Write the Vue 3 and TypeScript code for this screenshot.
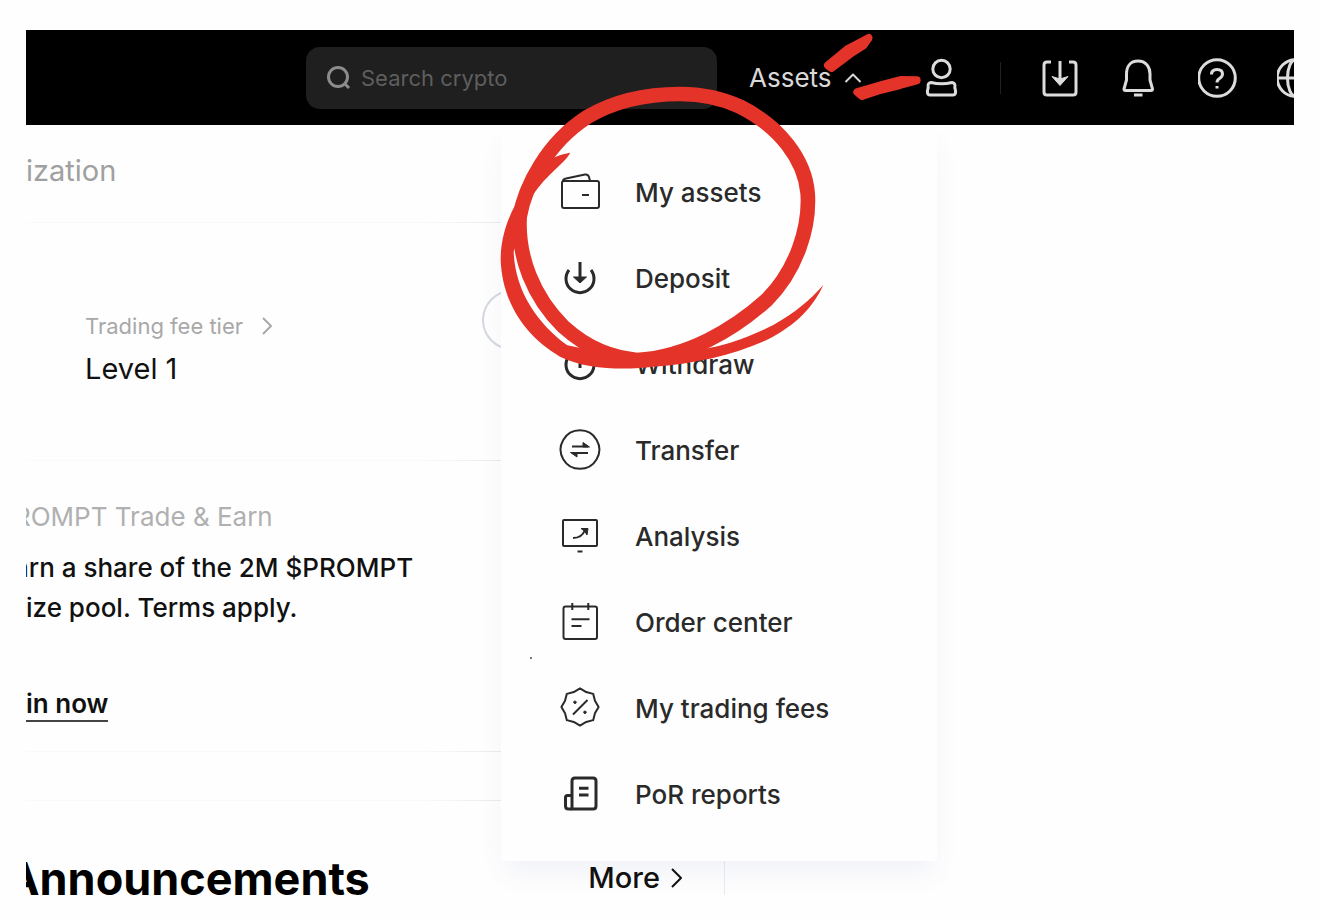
<script setup lang="ts">
interface Shape {
  d: string
  solid?: boolean
}
interface MenuItem {
  label: string
  heavy?: boolean
  shapes: Shape[]
}

function badgeOutline(cx: number, cy: number, tip: number, waist: number): string {
  const point = (r: number, step: number) => {
    const a = (step * Math.PI) / 8 - Math.PI / 2
    return `${(cx + r * Math.cos(a)).toFixed(2)} ${(cy + r * Math.sin(a)).toFixed(2)}`
  }
  let d = `M${point(tip, 0)}`
  for (let i = 1; i <= 16; i++) d += `L${point(i % 2 ? waist : tip, i)}`
  return d + 'Z'
}

const menu: MenuItem[] = [
  {
    label: 'My assets',
    shapes: [
      { d: 'M5 10H38Q40 10 40 12V35Q40 37 38 37H5Q3 37 3 35V12Q3 10 5 10Z' },
      { d: 'M4 10Q4 8 7 7.5L26 3.6Q29 3.2 30 6L31 10' },
      { d: 'M23 24H30' },
    ],
  },
  {
    label: 'Deposit',
    heavy: true,
    shapes: [
      { d: 'M10 13A14 14 0 1 0 32 13' },
      { d: 'M21 5V24' },
      { d: 'M14.5 20H27.5L21 26Z', solid: true },
    ],
  },
  {
    label: 'Withdraw',
    heavy: true,
    shapes: [
      { d: 'M10 13A14 14 0 1 0 32 13' },
      { d: 'M21 25V7' },
      { d: 'M14.5 12H27.5L21 5Z', solid: true },
    ],
  },
  {
    label: 'Transfer',
    shapes: [
      { d: 'M21 1.2A19.3 19.3 0 1 1 20.9 1.2Z' },
      { d: 'M13 17.5H29' },
      { d: 'M24 13.5L30.5 18H24Z', solid: true },
      { d: 'M13 24H29' },
      { d: 'M18 28L11.5 23.5H18Z', solid: true },
    ],
  },
  {
    label: 'Analysis',
    shapes: [
      { d: 'M5 5H37Q38 5 38 6V30Q38 31 37 31H5Q4 31 4 30V6Q4 5 5 5Z' },
      { d: 'M14 23Q23 23 26 15' },
      { d: 'M22 13.5H29L28 20L25.5 16Z', solid: true },
      { d: 'M18.5 36.5H23.5' },
    ],
  },
  {
    label: 'Order center',
    shapes: [
      { d: 'M6.5 5.5H36Q38 5.5 38 7.5V36Q38 38 36 38H6.5Q4.5 38 4.5 36V7.5Q4.5 5.5 6.5 5.5Z' },
      { d: 'M13.3 2V9M29.3 2V9' },
      { d: 'M12.5 18.3H30.5M12.5 25H22.5' },
    ],
  },
  {
    label: 'My trading fees',
    shapes: [
      { d: badgeOutline(21, 20, 18.6, 16.2) },
      { d: 'M14 27.5L28.5 13' },
      { d: 'M16 14A1.3 1.3 0 1 1 15.9 14ZM26 24A1.3 1.3 0 1 1 25.9 24Z', solid: true },
    ],
  },
  {
    label: 'PoR reports',
    heavy: true,
    shapes: [
      { d: 'M16 5H34Q37 5 37 8V33Q37 36 34 36H13V8Q13 5 16 5Z' },
      { d: 'M13 22.5H8.5Q6.5 22.5 6.5 24.5V33Q6.5 36 9.5 36H13' },
      { d: 'M20 15.3H29.5M20 22H29.5' },
    ],
  },
]
</script>

<template>
  <div class="frame">
    <header class="topbar">
      <label class="search">
        <svg width="26" height="26" viewBox="0 0 26 26" aria-hidden="true">
          <circle cx="12" cy="12" r="9.5" />
          <path d="M18.5 18.5L23 23" />
        </svg>
        <input type="search" placeholder="Search crypto" aria-label="Search crypto" />
      </label>
      <button class="assets" type="button" aria-expanded="true">
        Assets
        <svg width="18" height="12" viewBox="0 0 18 12" aria-hidden="true"><path d="M1.5 10L9 2.5L16.5 10" /></svg>
      </button>
      <nav class="tools">
        <button type="button" aria-label="Account">
          <svg viewBox="0 0 40 40">
            <circle cx="20.5" cy="11" r="8.7" />
            <path d="M10 24.5Q20.500 27 31 24.500Q34.800 25 33.800 29.500Q36 37 32 37H9Q5 37 7.200 29.500Q6.200 25 10 24.500Z" />
          </svg>
        </button>
        <span class="rule"></span>
        <button type="button" aria-label="Download">
          <svg viewBox="0 0 40 40">
            <path d="M11 4H7Q4 4 4 7V34Q4 37 7 37H33Q36 37 36 34V7Q36 4 33 4H29" />
            <path d="M20 3V24" />
            <path class="solid" d="M12 18.500L20 21L28 18.500L20 27.500Z" />
          </svg>
        </button>
        <button type="button" aria-label="Notifications">
          <svg viewBox="0 0 40 40">
            <path d="M19 3C11 3 7.500 9 7.500 16V22L5 31Q5 32.500 6.500 32.500H32Q33.500 32.500 33.500 31L31 22V16C31 9 27 3 19 3Z" />
            <path d="M15 37H23.500" />
          </svg>
        </button>
        <button type="button" aria-label="Help">
          <svg viewBox="0 0 40 40">
            <circle cx="19" cy="20" r="18.300" />
            <path d="M13.500 16.500Q13.500 11.500 19 11.500T24.500 16Q24.500 18.500 21.500 20.500Q19 22 19 24.500" />
            <path d="M19 28V30.500" />
          </svg>
        </button>
        <button type="button" aria-label="Language">
          <svg viewBox="0 0 40 40">
            <circle cx="18.500" cy="20" r="18.300" />
            <ellipse cx="18.500" cy="20" rx="8" ry="18.300" />
            <path d="M0 20H37" />
          </svg>
        </button>
      </nav>
    </header>

    <main>
      <div class="tabs line"><a href="#">ization</a></div>

      <section class="tier line">
        <div>
          <a class="muted" href="#">
            Trading fee tier
            <svg width="12" height="20" viewBox="0 0 12 20" aria-hidden="true"><path d="M2 2L10 10L2 18" /></svg>
          </a>
          <p class="level">Level 1</p>
        </div>
        <button class="round" type="button" aria-label="Next"></button>
      </section>

      <section class="promo line">
        <p class="campaign">ROMPT Trade &amp; Earn</p>
        <p class="offer">arn a share of the 2M $PROMPT<br />ize pool. Terms apply.</p>
        <a class="join" href="#">in now</a>
      </section>

      <div class="spacer line"></div>

      <section class="news">
        <h2>Announcements</h2>
        <a href="#">
          More
          <svg width="12" height="20" viewBox="0 0 12 20" aria-hidden="true"><path d="M1 1L10 10L1 19" /></svg>
        </a>
      </section>
    </main>

    <ul class="menu">
      <li v-for="item in menu" :key="item.label">
        <a href="#">
          <svg width="42" height="42" viewBox="0 0 42 42" :class="{ heavy: item.heavy }" aria-hidden="true">
            <path v-for="s in item.shapes" :key="s.d" :d="s.d" :class="{ solid: s.solid }" />
          </svg>
          {{ item.label }}
        </a>
      </li>
    </ul>
    <i class="speck"></i>

    <svg class="ink" width="450" height="360" viewBox="0 0 1350 1080" aria-hidden="true">
      <g transform="translate(0 120)">
        <path class="ring" d="M600 72C480 72 390 100 320 142C200 220 135 350 119 440C112 560 160 680 250 770C330 842 400 862 470 870C620 862 760 780 860 690C950 600 990 470 983 370C975 270 900 170 780 110C720 82 660 72 600 72Z" />
        <path d="M270 248C235 255 200 268 185 285C140 350 62 440 62 570C66 680 120 790 240 860C320 900 440 900 520 890C640 882 760 855 860 810C950 765 1000 710 1030 645C990 690 950 725 880 765C800 805 730 830 660 838L470 852L330 840L262 826C170 760 105 660 101 545L150 390C190 320 250 285 270 250Z" />
      </g>
      <path class="dash" d="M1044 106L1102 58L1128 44L1166 24L1150 46L1110 72L1054 114Z" />
      <path class="dash" d="M1132 186L1210 164L1262 150L1310 151L1260 165L1200 180L1146 198Z" />
    </svg>
  </div>
</template>

<style>
body {
  margin: 0;
  background: #fefefe;
}
</style>

<style scoped>
.frame {
  position: relative;
  margin: 30px 26px 25px;
  overflow: hidden;
  font-family: Inter, "Liberation Sans", sans-serif;
  color: #111;
}
a {
  color: inherit;
  text-decoration: none;
}
p,
h2,
ul {
  margin: 0;
  padding: 0;
}
button {
  padding: 0;
  border: 0;
  background: none;
  font: inherit;
}
svg {
  flex: none;
  fill: none;
  stroke: currentColor;
  stroke-width: 2;
  stroke-linejoin: round;
}
.heavy {
  stroke-width: 3;
}
.solid {
  fill: currentColor;
  stroke-width: 1;
}

.topbar {
  display: flex;
  align-items: center;
  height: 95px;
  padding-left: 280px;
  background: #000;
  color: #dcdcdc;
}
.search {
  display: flex;
  flex: none;
  align-items: center;
  gap: 9px;
  box-sizing: border-box;
  width: 411px;
  height: 62px;
  padding: 0 20px;
  border-radius: 14px;
  background: #1f1f1f;
  color: #8c8c8c;
}
.search svg {
  stroke-width: 3;
}
.search input {
  flex: 1;
  min-width: 0;
  padding: 0;
  border: 0;
  outline: 0;
  background: none;
  color: #ddd;
  font: 400 22px/30px Inter, "Liberation Sans", sans-serif;
}
.search input::placeholder {
  color: #5e5e5e;
  opacity: 1;
}
.assets {
  display: flex;
  flex: none;
  align-items: center;
  gap: 12px;
  width: 172px;
  margin-left: 32px;
  color: #d8d8d8;
  font-size: 26px;
}
.tools {
  display: flex;
  align-items: center;
  gap: 39px;
}
.tools button,
.tools svg {
  display: block;
  flex: none;
  width: 40px;
  height: 40px;
  color: inherit;
}
.tools svg {
  stroke-width: 3;
}
.rule {
  flex: none;
  width: 1px;
  height: 32px;
  background: #222;
}

.line {
  border-bottom: 1px solid;
  border-image: linear-gradient(90deg, #fafafa 76%, #dfe2e8) 1;
}
.tabs {
  width: 516px;
  height: 97px;
  color: #a0a0a0;
  font-size: 29px;
  line-height: 92px;
}
.muted {
  display: flex;
  align-items: center;
  gap: 18px;
  color: #a8a8a8;
  font-size: 22px;
  line-height: 32px;
}
.tier {
  display: flex;
  justify-content: space-between;
  box-sizing: border-box;
  width: 516px;
  height: 238px;
  padding: 87px 0 0 59px;
}
.level {
  margin-top: 10px;
  font-size: 29px;
  line-height: 34px;
}
.round {
  width: 60px;
  height: 60px;
  margin-top: -20px;
  border: 2px solid #d4d7dd;
  border-radius: 50%;
}
.promo {
  box-sizing: border-box;
  width: 516px;
  height: 291px;
  padding-top: 40px;
}
.campaign {
  color: #b0b0b0;
  font-size: 26px;
  line-height: 32px;
  text-indent: -12px;
}
.offer {
  margin-top: 15px;
  font-size: 26px;
  font-weight: 500;
  line-height: 40px;
  text-indent: -12px;
  white-space: nowrap;
}
.join {
  display: inline-block;
  margin-top: 60px;
  border-bottom: 2px solid #444;
  font-size: 26px;
  font-weight: 600;
  line-height: 32px;
}
.spacer {
  box-sizing: border-box;
  width: 516px;
  height: 49px;
}
.news {
  display: flex;
  align-items: flex-end;
  justify-content: space-between;
  box-sizing: border-box;
  width: 699px;
  height: 94px;
  padding-right: 41px;
  border-right: 1px solid #e9ebf2;
}
.news h2 {
  margin-left: -20px;
  color: #000;
  font-size: 45px;
  font-weight: 700;
  line-height: 33px;
}
.news a {
  position: relative;
  z-index: 2;
  display: flex;
  align-items: center;
  gap: 11px;
  font-size: 29px;
  font-weight: 500;
  line-height: 34px;
}

.menu {
  position: absolute;
  top: 95px;
  left: 475px;
  z-index: 1;
  box-sizing: border-box;
  width: 436px;
  padding: 24px 0;
  background: #fefefe;
  box-shadow: 0 16px 26px -4px rgba(70, 90, 170, 0.07);
  clip-path: inset(0 -40px -60px -40px);
  list-style: none;
}
.menu a {
  display: flex;
  align-items: center;
  gap: 34px;
  height: 86px;
  padding-left: 58px;
  color: #2a2a2a;
  font-size: 26px;
  font-weight: 500;
}
.speck {
  position: absolute;
  top: 627px;
  left: 504px;
  z-index: 2;
  width: 2px;
  height: 2px;
  background: #777;
}
.ink {
  position: absolute;
  top: 0;
  left: 454px;
  z-index: 3;
  pointer-events: none;
  overflow: visible;
  fill: #e43329;
  stroke: none;
}
.ink .ring {
  fill: none;
  stroke: #e43329;
  stroke-width: 44;
}
.ink .dash {
  stroke: #e43329;
  stroke-width: 24;
}
</style>
